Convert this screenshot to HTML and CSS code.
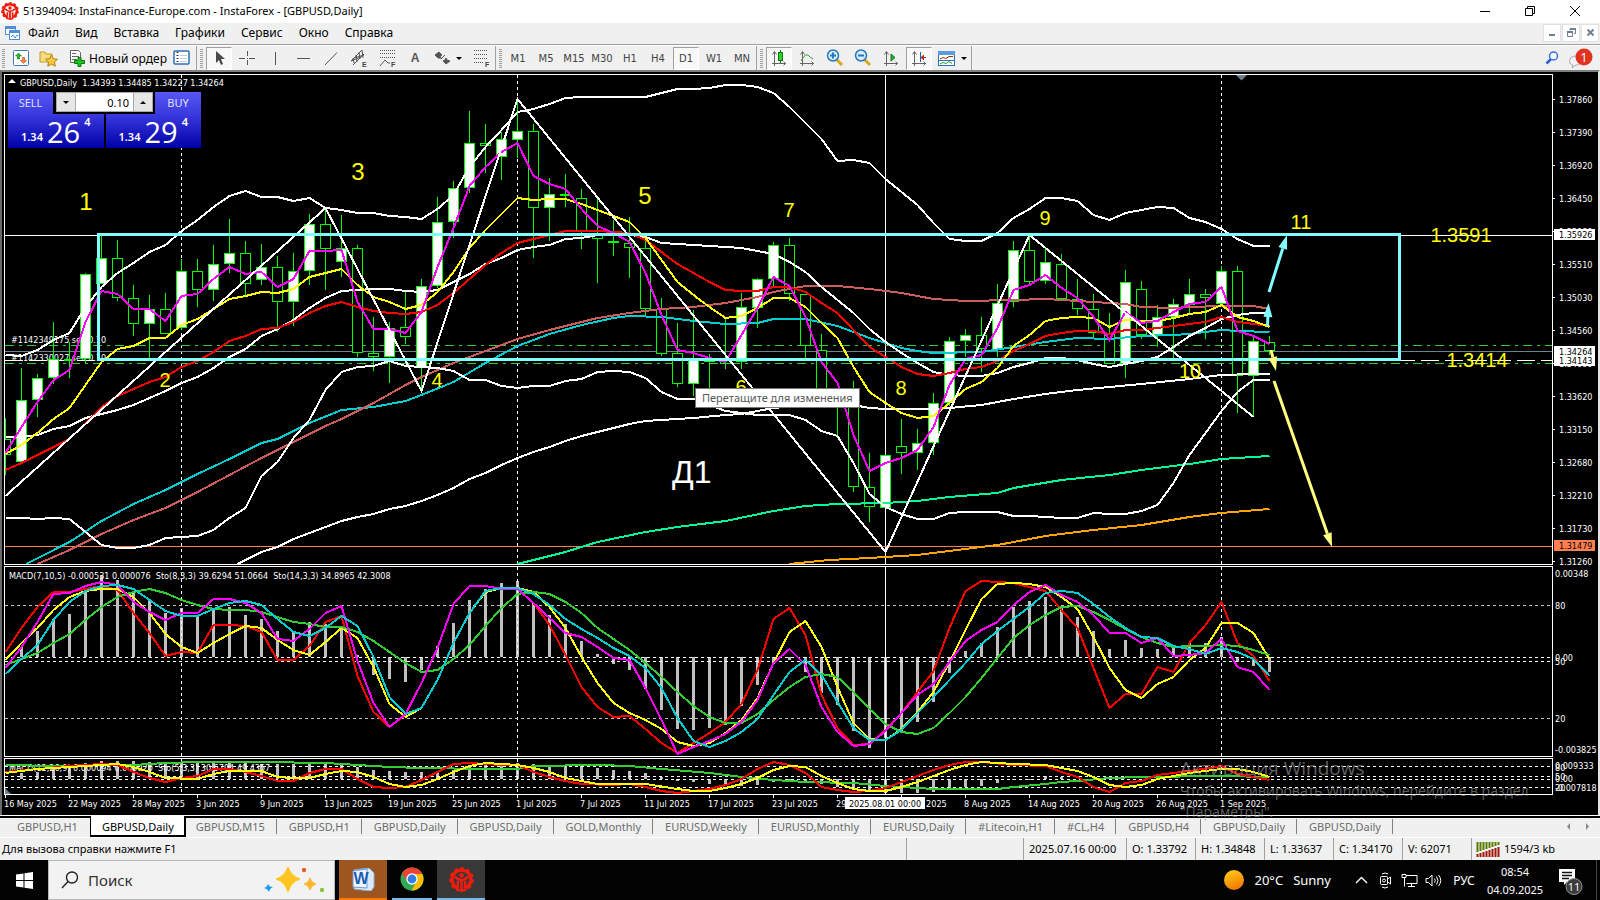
FILE: index.html
```html
<!DOCTYPE html>
<html lang="ru">
<head>
<meta charset="utf-8">
<title>51394094: InstaFinance-Europe.com - InstaForex - [GBPUSD,Daily]</title>
<link rel="stylesheet" href="styles.css">
</head>
<body>
<header class="titlebar">
  <svg class="app-logo" width="18" height="18" viewBox="0 0 24 24"><use href="#insta"/></svg>
  <span class="title">51394094: InstaFinance-Europe.com - InstaForex - [GBPUSD,Daily]</span>
  <button class="win" aria-label="Свернуть"><svg width="12" height="12"><path d="M1 6.500h10" stroke="#000"/></svg></button>
  <button class="win" aria-label="Восстановить"><svg width="12" height="12" fill="none" stroke="#000"><path d="M1.500 3.500h7v7h-7zM3.500 3.500v-2h7v7h-2"/></svg></button>
  <button class="win" aria-label="Закрыть"><svg width="12" height="12"><path d="M1 1l10 10M11 1L1 11" stroke="#000"/></svg></button>
</header>

<nav class="menubar">
  <svg width="15" height="15" fill="#fff" stroke="#4f8fd8"><rect x=".5" y="1.500" width="10" height="8"/><path d="M.5 3h10" stroke-width="2"/><rect x="4.500" y="5.500" width="10" height="9"/><path d="M4.500 7h10" stroke-width="2"/><path d="M6 12l2-2 2 3 2-3 1 1" fill="none"/></svg>
  <button>Файл</button><button>Вид</button><button>Вставка</button><button>Графики</button><button>Сервис</button><button>Окно</button><button>Справка</button>
  <span class="grow"></span>
  <button class="mdi" aria-label="Свернуть окно"><svg width="9" height="9"><path d="M1 7h6" stroke="#708090" stroke-width="2"/></svg></button>
  <button class="mdi" aria-label="Восстановить окно"><svg width="9" height="9" fill="none" stroke="#708090"><path d="M.5 4v4.500h5V4M3 2.500V.5h5.500v5H7"/><path d="M0 4h6M3 1h6" stroke-width="2"/></svg></button>
  <button class="mdi" aria-label="Закрыть окно"><svg width="9" height="9"><path d="M1.500 1.500l6 6M7.500 1.500l-6 6" stroke="#708090" stroke-width="2"/></svg></button>
</nav>

<div class="toolbar">
  <span class="grip"></span>
  <button class="tool" aria-label="Новый график"><svg width="16" height="16"><rect x=".5" y=".5" width="15" height="15" rx="1" fill="#fff" stroke="#3d7ab8"/><path d="M5.500 3l3 3h-2v3h-2V6h-2z" fill="#2fb62f" stroke="#0c7a0c" stroke-width=".6"/><path d="M10.500 13.500l-3-3h2v-3h2v3h2z" fill="#ff8a4a" stroke="#c43c08" stroke-width=".6"/></svg></button>
  <button class="tool" aria-label="Профили"><svg width="20" height="17"><path d="M1 2h5l1 2h6v8H1z" fill="#f6dc7e" stroke="#c09a28"/><path d="M12.500 5l1.800 3.700 4.200.5-3 2.900.8 4.100-3.800-2-3.700 2 .7-4.100-3-2.900 4.200-.5z" fill="#f6c840" stroke="#b08010"/></svg></button>
  <button class="tool order"><svg width="16" height="18"><path d="M1.500 1.500h8l2 2v10h-10z" fill="#fff" stroke="#666"/><path d="M3 4.500h4M3 7.500h7M3 10.500h5" stroke="#666"/><path d="M9 8.500h3v3h3.500v3H12v3H9v-3H5.500v-3H9z" fill="#1fc41f" stroke="#067806"/></svg><span>Новый ордер</span></button>
  <button class="tool market" aria-label="Обзор рынка"><svg width="17" height="16"><rect x="1" y="1" width="15" height="13" rx="1" fill="#fff" stroke="#2d6fb5" stroke-width="1.500"/><path d="M4.500 2v12" stroke="#333" stroke-width="2" stroke-dasharray="1 2"/><path d="M7 5.500h7M7 8.500h7M7 11.500h7" stroke="#bcd0ec"/></svg></button>
  <span class="sep first"></span><span class="grip"></span>
  <button class="tool on" aria-label="Курсор"><svg width="16" height="16"><path d="M5 1v12l3-3 2 5 2-1-2-5h4z" fill="#4a4a4a"/></svg></button>
  <button class="tool" aria-label="Перекрестие"><svg width="16" height="16"><path d="M0 8.500h6M10 8.500h6M8.500 1v5M8.500 10v5M8 8.500h1" stroke="#555"/></svg></button>
  <button class="tool" aria-label="Вертикальная линия"><svg width="16" height="16"><path d="M8.500 2v13" stroke="#555"/></svg></button>
  <button class="tool" aria-label="Горизонтальная линия"><svg width="16" height="16"><path d="M2 8.500h13" stroke="#555"/></svg></button>
  <button class="tool" aria-label="Трендовая линия"><svg width="16" height="16"><path d="M2 15L14 2.500" stroke="#555"/></svg></button>
  <button class="tool" aria-label="Канал"><svg width="18" height="18"><path d="M1 12L12 1M3 16L14 5M3 9l1 5M6 6l1 7M9 3l1 7M12 1l1 8M1 12l10-4M4 9l10-3" stroke="#555" fill="none"/><text x="12" y="18" class="ico-t">E</text></svg></button>
  <button class="tool" aria-label="Фибоначчи"><svg width="17" height="18"><path d="M1 1.500h15M1 4.500h15M1 8.500h15" stroke="#555" stroke-dasharray="1 1"/><path d="M1 17l5-6 3 3h2" stroke="#555" fill="none"/><text x="12" y="18" class="ico-t">F</text></svg></button>
  <button class="tool letter" aria-label="Текст">A</button>
  <button class="tool wide" aria-label="Стрелки"><svg width="15" height="14"><path d="M4 1l3 3-2 1 1 2H3L0 4zM6 8l4-4M11 7l1 2 3 1-4 3-3-3 2-1z" fill="#555" stroke="#555"/></svg><i class="caret"></i></button>
  <button class="tool" aria-label="Уровни"><svg width="17" height="18"><path d="M1 1.500h14M1 5.500h14M1 9.500h14M1 13.500h9" stroke="#555" stroke-dasharray="1 1"/><text x="12" y="18" class="ico-t">F</text></svg></button>
  <span class="sep"></span><span class="grip"></span>
  <button class="tool tf">M1</button><button class="tool tf">M5</button><button class="tool tf">M15</button><button class="tool tf">M30</button><button class="tool tf">H1</button><button class="tool tf">H4</button><button class="tool tf on">D1</button><button class="tool tf">W1</button><button class="tool tf">MN</button>
  <span class="sep"></span><span class="grip"></span>
  <button class="tool on" aria-label="Свечи"><svg width="16" height="17"><path d="M3.500 2v14M1 13.500h14M1.500 4.500l2-3 2 3M12.500 11.500l2 2-2 2" stroke="#666" fill="none"/><path d="M9.500 0v13" stroke="#0a7a0a"/><rect x="7.500" y="2.500" width="4" height="8" fill="#30d030" stroke="#0a7a0a"/></svg></button>
  <button class="tool" aria-label="Линия"><svg width="16" height="17"><path d="M3.500 2v14M1 13.500h14M1.500 4.500l2-3 2 3M12.500 11.500l2 2-2 2" stroke="#666" fill="none"/><path d="M2 11q5-10 9-4l3 2" stroke="#3a9a3a" fill="none"/></svg></button>
  <button class="tool" aria-label="Приблизить"><svg width="18" height="18"><path d="M10 10l6 6" stroke="#d8a820" stroke-width="3"/><circle cx="7" cy="6.500" r="5.500" fill="#d4ecfb" stroke="#2a78b8" stroke-width="1.500"/><path d="M4 6.500h6M7 3.500v6" stroke="#2a78b8" stroke-width="2"/></svg></button>
  <button class="tool" aria-label="Отдалить"><svg width="18" height="18"><path d="M10 10l6 6" stroke="#d8a820" stroke-width="3"/><circle cx="7" cy="6.500" r="5.500" fill="#d4ecfb" stroke="#2a78b8" stroke-width="1.500"/><path d="M4 6.500h6" stroke="#2a78b8" stroke-width="2"/></svg></button>
  <button class="tool" aria-label="Автопрокрутка"><svg width="16" height="17"><path d="M3.500 2v14M1 13.500h14M1.500 4.500l2-3 2 3M12.500 11.500l2 2-2 2" stroke="#666" fill="none"/><path d="M8 4l4 3.500L8 11z" fill="#20b040" stroke="#0a7a0a"/></svg></button>
  <button class="tool on" aria-label="Сдвиг графика"><svg width="16" height="17"><path d="M3.500 2v14M1 13.500h14M1.500 4.500l2-3 2 3M12.500 11.500l2 2-2 2" stroke="#666" fill="none"/><path d="M9.500 2v10" stroke="#1c62a8"/><path d="M15 7.500h-4M13 5l-3 2.500L13 10" fill="#b03010" stroke="#b03010"/></svg></button>
  <button class="tool wide" aria-label="Шаблоны"><svg width="17" height="15"><rect x=".5" y=".5" width="16" height="14" fill="#fff" stroke="#2d6fb5"/><path d="M0 2h17" stroke="#5a9ce0" stroke-width="4"/><path d="M2 8l3-1.500 3 1 3-2 4 0" stroke="#a03010" fill="none"/><path d="M1 9.500h15" stroke="#2d6fb5"/><path d="M2 13l3-1.500 3 1 3-2 3 2" stroke="#2a9a2a" fill="none"/></svg><i class="caret"></i></button>
  <span class="sep"></span>
  <span class="grow"></span>
  <button class="tool" aria-label="Поиск"><svg width="14" height="14"><path d="M1.500 12.500L6 8" stroke="#2a5fd0" stroke-width="2.500"/><circle cx="8.500" cy="5" r="4" fill="#f4f8ff" stroke="#3a70d8" stroke-width="1.500"/></svg></button>
  <button class="tool chat" aria-label="Сообщения"><svg width="26" height="21"><path d="M8 8c-8 0-8 9-3 9l-1 3 4-3c7 0 8-9 0-9z" fill="#f2f2f6" stroke="#a8a8b0"/><circle cx="16" cy="9" r="8.500" fill="#e03420"/><text x="16" y="14" text-anchor="middle" class="badge-t">1</text></svg></button>
</div>

<main class="workspace">
  <div class="chart">
    <div class="pane"><svg id="main"></svg>
      <div class="trade">
        <button class="side">SELL</button>
        <div class="spin"><button aria-label="Меньше"><i class="caret"></i></button><input aria-label="Объём" value="0.10"><button aria-label="Больше"><i class="caret up"></i></button></div>
        <button class="side">BUY</button>
        <div class="quotes"><button class="quote">1.34<b>26</b><sup>4</sup></button><button class="quote">1.34<b>29</b><sup>4</sup></button></div>
      </div>
      <div class="tip">Перетащите для изменения</div>
    </div>
    <svg class="scale" id="main-scale"></svg>
    <div class="pane"><svg id="osc"></svg></div>
    <svg class="scale" id="osc-scale"></svg>
    <div class="pane"><svg id="osc2"></svg></div>
    <svg class="scale" id="osc2-scale"></svg>
    <svg class="dates" id="dates"></svg>
  </div>
  <div class="activate"><strong>Активация Windows</strong><span>Чтобы активировать Windows, перейдите в раздел</span><span>"Параметры".</span></div>
</main>

<nav class="tabs">
  <button>GBPUSD,H1</button><button class="active">GBPUSD,Daily</button><button>GBPUSD,M15</button><button>GBPUSD,H1</button><button>GBPUSD,Daily</button><button>GBPUSD,Daily</button><button>GOLD,Monthly</button><button>EURUSD,Weekly</button><button>EURUSD,Monthly</button><button>EURUSD,Daily</button><button>#Litecoin,H1</button><button>#CL,H4</button><button>GBPUSD,H4</button><button>GBPUSD,Daily</button><button>GBPUSD,Daily</button>
  <span class="grow"></span>
  <svg width="24" height="9" fill="#888"><path d="M4 1v7L1 4.500zM20 1v7l3-3.500z"/></svg>
</nav>

<footer class="status">
  <span class="help">Для вызова справки нажмите F1</span><span class="blank"></span><span class="when">2025.07.16 00:00</span><span>O: 1.33792</span><span>H: 1.34848</span><span>L: 1.33637</span><span>C: 1.34170</span><span>V: 62071</span>
  <span class="net"><svg width="24" height="15"><path d="M1.500 0v10M4.500 0v9M7.500 0v8M10.500 0v7M13.500 0v6M16.500 0v5M19.500 0v4M22.500 0v3" stroke="#5c7a00" stroke-width="2"/><path d="M1.500 12v3M4.500 11v4M7.500 10v5M10.500 9v6M13.500 8v7M16.500 7v8M19.500 6v9M22.500 5v10" stroke="#a01808" stroke-width="2"/></svg>1594/3 kb</span>
</footer>

<div class="taskbar">
  <button class="start" aria-label="Пуск"><svg width="17" height="17" fill="#fff"><path d="M0 2.500l7.500-1V8H0zM8.500 1.300L17 0v8H8.500zM0 9h7.500v6.500L0 14.500zM8.500 9H17v8l-8.500-1.300z"/></svg></button>
  <label class="search">
    <svg width="18" height="18" fill="none" stroke="#222" stroke-width="1.400"><circle cx="11" cy="6.500" r="5.500"/><path d="M7 10.500L1 17"/></svg>
    <input aria-label="Поиск" placeholder="Поиск">
    <svg width="62" height="26"><path d="M24 1q2.500 8.500 11 11-8.500 2.500-11 12-2.500-9.500-11-12 8.500-2.500 11-11z" fill="#fcc521" stroke="#fcc521" stroke-width="2" stroke-linejoin="round"/><path d="M46 11q1 5 6 6-5 1-6 6-1-5-6-6 5-1 6-6z" fill="#fbb52a" stroke="#fbb52a"/><path d="M4 17q1 3 5 3-3 1-4 5-1-3-5-4 3-1 4-4z" fill="#1d9bf0"/><circle cx="40" cy="3" r="2.200" fill="#f25c22"/><circle cx="58" cy="23" r="2.200" fill="#8bc53f"/></svg>
  </label>
  <button class="task word" aria-label="Word"><svg width="23" height="23"><path d="M2 2L17 0l5 5v14l-3 4-17-2z" fill="#dce9fa" stroke="#8cb0e0"/><path d="M1 3l14-2v19L1 19z" fill="#eef5ff" stroke="#6f9ad8"/><text x="9" y="16" text-anchor="middle" class="w-t">W</text></svg></button>
  <button class="task chrome" aria-label="Chrome"><svg width="24" height="24"><circle cx="12" cy="12" r="11.500" fill="#34a853"/><path d="M2 6.200A11.500 11.500 0 0 1 22.300 7H12L7.500 14.500z" fill="#ea4335"/><path d="M22.400 7A11.500 11.500 0 0 1 11.500 23.500L16.500 14.500 15 7z" fill="#fbbc04"/><circle cx="12" cy="12" r="5.700" fill="#fff"/><circle cx="12" cy="12" r="4.400" fill="#2f7de9"/></svg></button>
  <button class="task insta" aria-label="InstaForex"><svg width="25" height="25" viewBox="0 0 24 24"><use href="#insta"/></svg></button>
  <span class="grow"></span>
  <button class="weather"><i class="sun"></i><span>20°C</span><span>Sunny</span></button>
  <button class="tray" aria-label="Скрытые значки"><svg width="13" height="8" fill="none" stroke="#fff" stroke-width="1.400"><path d="M1 7l5.500-5.500L12 7"/></svg></button>
  <button class="tray" aria-label="Камера"><svg width="13" height="17" fill="none" stroke="#fff"><path d="M3 2q3-2 6 0M3 15q3 2 6 0"/><rect x="1.500" y="4.500" width="7" height="8" rx="1"/><circle cx="5" cy="8.500" r="1.500"/><path d="M8.500 7l3-2v7l-3-2"/></svg></button>
  <button class="tray" aria-label="Сеть"><svg width="17" height="15" fill="none" stroke="#fff"><path d="M5 2.500h11v8H5.500M10.500 10.500v3M7 13.500h7M3.500 5v8.500M1 1.500h4v3H1z"/></svg></button>
  <button class="tray" aria-label="Громкость"><svg width="17" height="15" fill="none" stroke="#fff"><path d="M1 5.500h2.500L7 2v11L3.500 9.500H1zM9.500 5.500q1.500 2 0 4M11.500 3.500q3 4 0 8M13.500 2q4.500 5.500 0 11"/></svg></button>
  <button class="lang">РУС</button>
  <button class="clock"><span>08:54</span><span>04.09.2025</span></button>
  <button class="notes" aria-label="Уведомления"><svg width="27" height="28"><path d="M1 1h16v13H9l-3 3v-3H1z" fill="#fff"/><path d="M4 4.500h10M4 7.500h10M4 10.500h7" stroke="#111" stroke-width="1.400"/><circle cx="16" cy="18.500" r="8" fill="#3c3c3c" stroke="#999"/><text x="16" y="23" text-anchor="middle" class="note-t">11</text></svg></button>
</div>

<svg class="defs" aria-hidden="true"><symbol id="insta" viewBox="0 0 24 24"><g fill="none" stroke="#ee1c0e"><path d="M8.500 20.500A9.500 9.500 0 0 1 5.500 5.500M15.500 20.500A9.500 9.500 0 0 0 18.500 5.500M5.500 5.500Q12 .5 18.500 5.500" stroke-width="3.200"/><circle cx="12" cy="12" r="10.500" stroke-width="2.600" stroke-dasharray="3.400 2.600"/><path d="M12 12v12M8.500 13.500v7M15.500 13.500v7" stroke-width="2.400"/><path d="M5.500 9q3 3.500 6.500 3.500T18.500 9" stroke-width="2.400"/></g><circle cx="12" cy="8" r="2.300" fill="#ee1c0e"/></symbol></svg>
<script src="chart.js"></script>
</body>
</html>
```
FILE: styles.css
```css
* { box-sizing: border-box; }
html, body { height: 100%; }
body { margin: 0; display: flex; flex-direction: column; overflow: hidden; background: #f0f0f0; color: #000; font: 12px "Noto Sans", "Open Sans", sans-serif; }
button { margin: 0; padding: 0; border: 0; background: none; font: inherit; color: inherit; }
input { margin: 0; padding: 0; border: 0; min-width: 0; font: inherit; }
svg { display: block; flex: none; }
.grow { flex: 1; }
.defs { position: absolute; width: 0; height: 0; }

.titlebar { flex: none; height: 23px; display: flex; align-items: center; background: #fff; padding: 0 3px 2px 1px; }
.title { flex: 1; padding-left: 4px; font-size: 11px; line-height: 23px; }
.win { width: 45px; height: 23px; display: grid; place-items: center; }

.menubar { flex: none; height: 22px; display: flex; align-items: center; gap: 16px; padding: 0 0 2px 5px; border-bottom: 1px solid #a0a0a0; }
.menubar button:first-of-type { margin-left: -8px; }
.menubar .mdi { width: 18px; height: 18px; display: grid; place-items: center; background: #fff; border: 1px solid #e0e0e0; margin: 0 1px 0 -16px; }

.toolbar { flex: none; height: 25px; display: flex; align-items: center; border-top: 1px solid #fff; padding-left: 2px; }
.tool { flex: none; width: 28px; height: 23px; display: flex; align-items: center; justify-content: center; color: #444; }
.tool.on { background: #f8f8f8; border: 1px solid #a0a0a0; border-right-color: #fff; border-bottom-color: #fff; width: 26px; margin: 0 1px; }
.tool.order { width: 104px; padding-left: 6px; gap: 4px; color: #000; justify-content: flex-start; }
.tool.market { width: 28px; }
.tool.wide { width: 38px; gap: 6px; }
.tool.letter { font: bold 12px "Liberation Sans", sans-serif; color: #555; }
.tool.tf { font: 10px "DejaVu Sans", sans-serif; }
.tool.chat { width: 34px; padding-right: 4px; }
.grip { width: 3px; height: 19px; margin-right: 2px; background: repeating-linear-gradient(#a0a0a0 0 1px, #f0f0f0 1px 2px); }
.sep { width: 1px; height: 24px; background: #a0a0a0; margin: 0 3px 0 0; }
.sep.first { margin-left: 1px; }
.caret { width: 0; height: 0; border: 3px solid transparent; border-top-color: #000; border-bottom: 0; }
.caret.up { border: 3px solid transparent; border-bottom-color: #000; border-top: 0; }
.ico-t { font: bold 7px "Liberation Sans", sans-serif; fill: #444; }
.badge-t { font: 13px "Open Sans", sans-serif; fill: #fff; }

.workspace { position: relative; flex: 1; min-height: 0; display: flex; background: #000; border: solid #696969; border-width: 2px 2px 0; border-top-color: #808080; border-right-color: #e3e3e3; padding: 2px 0 0 2px; }
.chart { flex: 1; min-width: 0; display: grid; grid-template-columns: minmax(0, 1fr) 45px; grid-template-rows: minmax(0, 491fr) minmax(0, 191fr) minmax(0, 37fr) 19px; row-gap: 1px; }
.pane { position: relative; border: 1px solid #fff; overflow: hidden; }
.pane > svg { width: 100%; height: 100%; }
.scale { width: 45px; height: 100%; overflow: visible; }
.dates { grid-column: 1 / -1; width: 100%; height: 20px; margin-top: -1px; overflow: visible; }
.chart text { font: 9px "DejaVu Sans Condensed", "Open Sans", sans-serif; fill: #fff; }
.chart .mark { font: 20px "Liberation Sans", sans-serif; fill: #ff0; }
.chart .mark.big { font-size: 24px; }
.chart .name { font: 32px "Liberation Sans", sans-serif; fill: #fff; }
.chart .on-white { fill: #000; }

.trade { position: absolute; left: 3px; top: 17px; width: 193px; display: grid; grid-template-columns: 45px minmax(0, 1fr) 46px; }
.trade button { color: #dfe0ff; font-size: 11px; }
.side { height: 22px; padding-bottom: 2px; background: linear-gradient(#5757f5, #3a3ade); }
.trade .side { padding-bottom: 2px; }
.spin { display: flex; height: 20px; margin: 0 2px 0 3px; border: 1px solid #a8a8a8; background: #fff; }
.trade .spin button { flex: none; width: 18px; background: #e6e6e6; display: grid; place-items: center; }
.spin input { flex: 1; width: 0; text-align: right; padding-right: 4px; border: solid #a8a8a8; border-width: 0 1px; background: #fff; font-size: 11px; }
.quotes { grid-column: 1 / -1; display: grid; grid-template-columns: 1fr 1fr; column-gap: 2px; }
.trade .quote { height: 34px; display: flex; align-items: flex-end; justify-content: center; padding-bottom: 5px; background: linear-gradient(#3a3ade, #0000a8); color: #fff; font-weight: 600; line-height: 12px; }
.quote b { font: 29px "Open Sans", sans-serif; line-height: 22px; padding: 0 4px; }
.quote sup { align-self: flex-start; padding-top: 2px; font-size: 11px; line-height: 12px; }
.tip { position: absolute; left: 690px; top: 313px; padding: 0 6px; background: #fff; border: 1px solid #767676; color: #575757; font-size: 11px; line-height: 18px; white-space: nowrap; }

.activate { position: absolute; left: 1178px; top: 684px; display: flex; flex-direction: column; color: rgba(165, 165, 165, .6); font: 14px "Open Sans", sans-serif; line-height: 21px; white-space: nowrap; z-index: 2; }
.activate strong { font-size: 19px; font-weight: 400; line-height: 24px; }

.tabs { flex: none; height: 23px; display: flex; align-items: center; border-top: 1px solid #fff; border-bottom: 1px solid #fff; padding: 0 10px 0 2px; color: #6d6d6d; font-size: 11px; box-shadow: inset 0 2px #000; }
.tabs button { padding: 0 11px 0 12px; height: 15px; line-height: 14px; border-right: 1px solid #808080; }
.tabs button:first-child { padding: 0 12px 0 15px; border: 0; }
.tabs .active { align-self: stretch; height: auto; background: #fff; color: #000; border: solid #000; border-width: 0 2px 2px 1px; padding: 2px 10px 0 11px; }
.tabs .active + button { padding-left: 10px; }
.status { flex: none; height: 22px; display: flex; align-items: stretch; font-size: 11px; line-height: 22px; }
.status span { padding: 0 5px; width: 69px; border-left: 1px solid #a0a0a0; white-space: nowrap; }
.status .help { flex: 1; border: 0; padding-left: 2px; }
.status .blank { width: 117px; }
.status .when { width: 103px; }
.status .net { width: 129px; display: flex; align-items: center; gap: 4px; padding-left: 4px; }

.taskbar { flex: none; height: 40px; display: flex; align-items: stretch; background: #030303; color: #fff; font-size: 13px; }
.start { width: 48px; display: grid; place-items: center; }
.search { width: 287px; display: flex; align-items: center; gap: 9px; padding: 0 8px 0 12px; background: #f2f2f2; border: 1px solid #b8b8b8; }
.search input { flex: 1; background: none; font-size: 15px; }
.search input::placeholder { color: #333; opacity: 1; }
.task { width: 48px; display: grid; place-items: center; border-bottom: 2px solid #76b9ed; }
.task.word { margin-left: 4px; background: #9d5620; border-color: #ff7b00; }
.task.chrome { width: 40px; margin: 0 5px; }
.task.insta { background: #383838; }
.w-t { font: bold 16px "Liberation Sans", sans-serif; fill: #1c5cb0; }
.weather { display: flex; align-items: center; gap: 10px; margin-right: 18px; }
.sun { width: 20px; height: 20px; border-radius: 50%; background: linear-gradient(160deg, #ffd21a, #f06a00); }
.tray { width: 24px; display: grid; place-items: center; }
.lang { width: 38px; font-size: 12px; }
.clock { width: 80px; display: flex; flex-direction: column; align-items: center; justify-content: center; gap: 1px; font-size: 11px; line-height: 17px; margin-left: -8px; }
.clock span { white-space: nowrap; }
.notes { width: 42px; margin-right: 3px; border-right: 1px solid #444; display: grid; place-items: center; }
.taskbar .notes { padding: 4px 8px 0 0; }
.note-t { font: 11px "Open Sans", sans-serif; fill: #fff; }
```
FILE: chart.js
```js
// Bars are 16px apart; vertical values are screen rows, shifted by each pane's top.
const STEP = 16;
const bx = i => i * STEP + 0.5;

// "355 356 8:263" -> consecutive bars, with "i:y" jumping to bar i
function parse(text) {
  let i = -1;
  return text.trim().split(/\s+/).map(t => {
    const p = t.split(':');
    i = p.length > 1 ? +p[0] : i + 1;
    return [i, +p[p.length - 1]];
  });
}
const line = (top, color, text, w = 2) =>
  `<polyline points="${parse(text).map(([i, y]) => bx(i) + ',' + (y - top)).join(' ')}" fill="none" stroke="${color}" stroke-width="${w}" shape-rendering="crispEdges"/>`;
const hline = (y, color, dash = '', x1 = 0, x2 = '100%') =>
  `<line x1="${x1}" x2="${x2}" y1="${y + .5}" y2="${y + .5}" stroke="${color}" stroke-dasharray="${dash}" shape-rendering="crispEdges"/>`;
const vline = (i, dash = '') =>
  `<line x1="${bx(i)}" x2="${bx(i)}" y1="0" y2="100%" stroke="#fff" stroke-dasharray="${dash}" shape-rendering="crispEdges"/>`;
const text = (x, y, s, cls = '', anchor = 'start') =>
  `<text x="${x}" y="${y}" class="${cls}" text-anchor="${anchor}">${s}</text>`;
const verticals = () => [11, 32, 76].map(i => vline(i, '3 3')).join('') + vline(55);
const draw = (id, html) => { document.getElementById(id).innerHTML = html; };

// high, body top, body bottom, low, rising (1) or falling (0)
const candles = [
[418,439,455,475,0],[368,400,462,462,1],[374,378,400,417,1],[322,359,378,384,1],[342,359,360,378,0],[273,274,359,363,1],[235,258,284,284,1],[240,258,298,301,0],
[285,298,324,336,0],[295,309,324,359,1],[293,309,334,334,0],[259,271,328,330,1],[259,271,290,307,0],[245,264,290,301,1],[219,253,264,273,1],[241,253,284,296,0],
[244,267,280,285,1],[256,267,302,332,0],[253,271,302,326,1],[214,224,271,285,1],[210,224,249,290,0],[215,248,262,277,1],[245,248,353,357,0],[317,353,357,371,0],
[322,328,357,383,1],[292,327,337,344,0],[279,286,368,390,1],[197,222,286,288,1],[181,188,222,238,1],[111,143,188,193,1],[124,143,146,173,0],[132,139,157,180,1],
[100,131,140,158,1],[124,131,208,258,0],[178,194,208,241,1],[174,194,195,207,0],[189,198,231,249,0],[199,234,239,283,0],[220,241,243,256,0],[217,243,248,278,0],
[237,248,309,315,0],[298,309,354,356,0],[323,353,384,387,0],[310,360,384,396,1],[354,360,362,390,0],[319,360,364,369,0],[293,307,362,369,1],[278,279,308,328,1],
[242,245,279,287,1],[238,245,294,301,0],[294,294,346,358,0],[334,350,395,400,0],[388,395,405,436,0],[381,395,487,492,0],[453,487,507,522,0],[455,455,508,508,1],
[419,446,453,474,0],[429,443,453,470,1],[393,403,443,455,1],[337,341,403,406,1],[329,335,341,357,1],[317,335,349,372,0],[284,303,350,357,1],[241,250,302,307,1],
[237,250,282,285,0],[249,262,281,284,1],[254,264,299,299,0],[279,299,309,315,0],[294,309,333,338,0],[313,333,364,364,0],[270,282,364,378,1],[281,289,335,339,0],
[305,317,335,347,1],[299,304,317,358,1],[279,294,305,313,1],[289,294,298,339,0],[266,271,304,306,1],[266,271,376,413,0],[335,341,376,417,1],[336,342,351,355,0]];

function candle([hi, a, b, lo, up], i) {
  const x = bx(i), t = 75;
  return `<path d="M${x} ${hi - t}V${a - t}M${x} ${b - t}V${lo - t}" stroke="#0f0"/>` +
    `<rect x="${x - 5}" y="${a - t + .5}" width="10" height="${Math.max(b - a - 1, 1)}" fill="${up ? '#fff' : '#000'}" stroke="#0f0"/>`;
}
function arrow(x1, y1, x2, y2, color) {
  const a = Math.atan2(y2 - y1, x2 - x1), L = 14, hx = x2 - L * Math.cos(a), hy = y2 - L * Math.sin(a);
  const nx = -Math.sin(a) * 4.5, ny = Math.cos(a) * 4.5;
  return `<path d="M${x1} ${y1}L${hx} ${hy}" stroke="${color}" stroke-width="3"/><path d="M${x2} ${y2}L${hx + nx} ${hy + ny}L${hx - nx} ${hy - ny}z" fill="${color}"/>`;
}

const T = 75;
draw('main',
  verticals() +
  hline(235 - T, '#fff') + hline(345 - T, '#32cd32', '9 5 3 5') + hline(363 - T, '#32cd32', '9 5 3 5') +
  hline(351 - T, '#708090') + hline(360 - T, '#fff', '18 6') + hline(546 - T, '#ff7f50') +
  text(6, 343 - T, '#1142349175 sell 0.10') + text(6, 361 - T, '#1142330027 sell 0.10') +
  `<g shape-rendering="crispEdges">${candles.map(candle).join('')}</g>` +
  line(T, '#00ced1', '1.300:564 4:542 6:521 8:504 10:490 12:474 14:459 16:443 17:439 19:423 21:410 23:407 25:401 26:395 28:382 30:363 32:346 34:334 36:325 38:318 39:316 41:317 43:321 45:324 47:323 48:319 50:319 52:326 54:338 56:348 57:351 58:353 61:352 63:347 65:342 67:338 69:339 71:336 73:335 74:334 76:330 77:331 79:332') +
  line(T, '#cd5c5c', '2:564 4:550 6:534 8:520 10:508 12:492 14:475 16:458 18:442 20:426 21:419 23:403 25:385 26:377 28:363 30:351 32:339 34:330 36:322 37:318 39:313 41:309 43:307 45:303 47:297 48:292 50:286 52:286 54:289 56:293 58:299 60:301 63:300 65:299 67:301 70:304 71:307 73:308 74:307 76:306 78:306 79:309') +
  line(T, '#00fa9a', '32:564 35:552 37:542 40:532 42:527 45:521 48:511 50:506 52:504 55:503 57:501 59:497 62:493 63:488 66:480 69:475 71:470 74:464 76:459 79:456') +
  line(T, '#ffa500', '49:564 51.500:560 54:558 57:555 59:551 62:545 65:536 68:530 71:525 74:517 76:513 79:509') +
  line(T, '#fff', '355 356 350 340 333 307 287 273 263 252 245 231 220 207 196 191 197 197 201 198 208 210 213 213 216 217 219 209 195 167 147 130 112 109 104 98 97 97 97 97 97 93 89 89 88 85 85 87 93 107 123 139 161 160 163 179 192 205 223 239 241 241 233 218 209 198 198 201 215 220 213 210 207 208 218 222 229 239 246 246') +
  line(T, '#fff', '437 437 435 429 426 418 414 410 405 398 391 383 377 368 357 349 336 329 320 308 298 291 290 289 289 291 292 290 282 274 264 258 250 247 245 239 238 235 234 235 237 243 244 245 246 247 248 251 254 262 272 287 300 313 329 342 353 363 372 375 376 376 373 367 363 358 358 360 364 367 364 361 357 347 336 328 319 315 313 313') +
  line(T, '#fff', '518 518 519 518 519 532 545 548 548 545 538 537 536 530 518 508 476 462 438 420 390 372 367 366 361 366 367 368 371 380 380 386 388 386 386 381 379 372 371 372 378 392 399 399 405 411 413 415 415 415 420 431 436 463 494 507 514 519 519 513 512 512 512 516 516 517 518 518 513 514 514 511 505 483 455 433 411 392 380 380') +
  line(T, '#fff', '14.500:564 15:560 552 547 539 533 527 521 517 514 509 506 501 495 488 479 473 465 458 452 447 441 436 432 428 424 421 420 43:418 45:415 414 411 408 50:405 53:405 408 409 58:409 408 61:405 63:399 65:394 67:390 69:387 71:384 74:379 76:375 78:374 79:374') +
  line(T, '#f00', '470 463 455 447 439 423 407 396 389 382 377 367 361 352 341 336 329 328 322 313 306 302 307 311 313 314 312 305 293 279 265 253 243 239 235 231 231 231 232 233 240 252 264 273 282 290 291 291 287 287 292 303 313 330 347 357 367 374 376 373 369 367 361 351 344 336 333 331 331 334 330 330 328 326 324 322 317 322 324 326') +
  line(T, '#ff0', '454 445 433 419 408 385 362 349 346 338 338 325 319 309 299 296 292 293 289 277 273 269 285 297 302 309 305 292 272 248 230 214 198 200 199 199 204 210 216 222 238 260 282 295 307 318 316 308 298 298 307 323 338 367 392 403 413 418 416 403 389 382 368 346 335 321 318 317 318 327 320 321 321 318 314 312 305 317 321 327') +
  line(T, '#f0f', '453 427 402 380 370 322 291 294 309 309 321 296 294 279 267 274 272 287 279 251 251 250 302 329 329 333 312 267 228 186 167 152 143 176 184 189 209 226 233 242 273 315 350 353 358 362 335 308 277 286 317 362 383 435 471 463 458 450 427 385 359 355 328 290 285 275 288 298 317 340 312 323 321 312 304 302 287 331 336 344') +
  line(T, '#fff', '0:496 20:208 26:391 32:99 55:552 64:235 78:417') +
  `<rect x="93.500" y="${234.5 - T}" width="1301" height="125" fill="none" stroke="#7fffff" stroke-width="3"/>` +
  arrow(1264, 217, 1282, 160, '#7fffff') + arrow(1262.5, 251, 1263.5, 228, '#7fffff') +
  arrow(1266, 275, 1271, 296, '#ffff80') + arrow(1269, 306, 1327, 472, '#ffff80') +
  `<path d="M1231 0h11l-5.500 5.500z" fill="#708090"/>` +
  [[81,135,1,' big'],[353,105,3,' big'],[640,129,5,' big'],[160,312,2],[432,312,4],[784,142,7],[736,319,6],[896,320,8],[1040,150,9],[1185,303,10],[1296,154,11],[1456,167,'1.3591'],[1472,292,'1.3414']]
    .map(([x, y, s, c = '']) => text(x, y, s, 'mark' + c, 'middle')).join('') +
  text(667, 408, 'Д1', 'name') +
  `<path d="M3 8h8l-4-4z" fill="#fff"/>` + text(15, 11, 'GBPUSD,Daily&#160; 1.34393 1.34485 1.34227 1.34264'));

const tag = (y, s, bg) => `<rect x="1" y="${y - 5}" width="41" height="11" fill="${bg}"/>` + text(6, y + 4, s, 'on-white');
const tick = (y, s) => `<path d="M0 ${y}.5h2" stroke="#fff"/>` + text(6, y + 4, s);
draw('main-scale',
  ['1.37860','1.37390','1.36920','1.36450','1.35980','1.35510','1.35030','1.34560','1.34090','1.33620','1.33150','1.32680','1.32210','1.31730','1.31260']
    .map((s, k) => tick(25 + 33 * k, s)).join('') +
  tag(160, '1.35926', '#fff') + tag(277, '1.34264', '#fff') + tag(286, '1.34143', '#fff') + tag(471, '1.31479', '#ff7f50'));

const bars = (top, base, list) => parse(list).map(([i, y]) =>
  `<rect x="${bx(i) - 1.5}" y="${Math.min(y, base) - top}" width="3" height="${Math.max(Math.abs(y - base), 1)}" fill="#c0c0c0" shape-rendering="crispEdges"/>`).join('');

const O = 567;
draw('osc',
  bars(O, 657, '1:647 631 619 614 591 575 580 593 601 613 608 615 609 607 615 619 631 632 622 624 628 655 675 679 682 670 646 623 600 589 583 581 603 615 624 641 654 664 670 689 710 729 730 728 725 706 685 664 660 672 693 705 731 748 738 731 722 702 673 651 643 627 607 601 597 607 617 631 649 640 648 649 646 643 643 637 662 666 672') +
  verticals() + [605, 718].map(y => hline(y - O, '#c0c0c0', '3 3')).join('') + [657, 661].map(y => hline(y - O, '#fff', '3 3')).join('') +
  line(O, '#f00', '652 628 607 592 592 589 586 590 613 633 656 652 653 625 625 626 632 660 660 646 622 616 676 712 727 715 683 648 604 586 586 589 589 603 625 655 687 707 717 716 729 743 753 743 733 722 704 670 619 608 635 695 728 745 744 730 713 692 671 628 591 581 582 583 587 591 610 628 668 708 694 694 667 672 643 625 602 643 656 681') +
  line(O, '#ff0', '660 643 628 610 597 591 589 589 597 613 634 647 653 643 634 626 628 640 650 655 642 628 638 667 704 717 708 680 643 613 592 588 588 592 607 628 657 683 703 713 720 729 742 746 743 733 720 698 663 632 621 647 687 723 739 740 729 712 692 662 630 599 584 583 584 587 597 609 637 668 690 698 684 677 660 648 623 623 633 659') +
  line(O, '#32cd32', '665 659 653 643 634 620 607 597 592 589 593 600 605 609 610 610 612 617 622 624 627 627 632 641 652 663 672 670 659 645 626 608 594 592 594 602 613 628 639 650 663 677 692 706 717 723 723 714 700 687 677 674 677 692 709 724 732 734 728 713 697 678 658 638 625 615 607 606 612 620 629 637 643 647 646 646 645 646 650 655') +
  line(O, '#f0f', '668 647 622 594 593 586 582 585 602 612 620 613 613 599 599 603 613 639 641 629 613 606 661 703 727 714 683 648 604 586 586 589 589 603 618 633 637 647 658 660 688 720 754 747 741 734 722 700 663 649 665 707 732 746 744 731 713 695 684 662 641 630 622 605 592 585 595 602 615 633 633 643 638 656 655 653 639 667 672 690') +
  line(O, '#00ced1', '674 659 645 620 602 591 586 585 589 600 611 616 616 609 603 601 605 619 632 636 628 616 626 657 697 714 708 680 643 613 591 588 588 594 605 619 629 638 648 656 668 688 718 741 747 741 732 719 695 672 660 675 702 728 740 740 730 713 697 680 663 644 631 619 607 593 591 593 604 617 628 637 638 646 649 654 648 652 659 676') +
  text(4, 12, 'MACD(7,10,5) -0.000531 0.000076&#160; Sto(8,3,3) 39.6294 51.0664&#160; Sto(14,3,3) 34.8965 42.3008'));
draw('osc-scale', text(2, 11, '0.00348') + text(2, 43, '80') + text(2, 95, '0.00') + text(2, 99, '50') + text(2, 156, '20') + text(2, 187, '-0.003825'));

const P = 759;
draw('osc2',
  bars(P, 779, '1:773 772 769 767 763 761 761 761 762 762 763 763 763 763 763 764 764 764 764 764 764 767 770 771 772 772 772 770 767 765 764 763 764 765 766 766 768 770 771 773 777 781 782 784 785 786 785 782 781 783 784 787 789 791 793 793 793 792 788 787 786 783 780 779 776 777') +
  verticals() + [766, 776, 779, 787].map(y => hline(y - P, '#fff', '3 3')).join('') +
  text(4, 12, 'MACD(12,26,9) 0.000094 0.000920&#160; Sto(5,3,3) 30.6794 49.4357') +
  line(P, '#32cd32', '0:765 3:766 8:765 10:763 12:762 16:762 20:763 22:765 24:767 26:768 30:769 32:769 33:766 37:765 39:766 41:769 44:773 46:777 48:780 50:782 53:783 55:786 57:788 58:789 62:789 63:787 65:784 66:782 67:781 69:778 71:777 76:776 79:777') +
  line(P, '#f00', '0:772 2:769 4:766 765 764 765 772 778 782 778 776 769 769 772 776 781 781 773 769 769 779 787 788 787 780 772 764 763 31:765 765 772 777 781 784 38:785 784 787 791 793 791 789 785 779 769 762 765 773 787 790 792 791 788 782 776 770 765 762 762 63:765 65:766 772 777 787 792 783 781 775 74:771 76:766 774 777 780') +
  line(P, '#ff0', '0:773 2:769 4:767 7:764 767 772 778 12:779 774 771 16:771 777 778 778 774 771 772 777 784 787 785 779 772 766 763 32:765 768 772 778 781 784 40:784 42:789 791 791 788 784 778 770 766 767 776 783 789 791 791 787 782 776 770 765 762 63:764 65:765 67:771 777 785 787 785 779 776 773 76:769 769 772 777') +
  `<path d="M0 29v6h6z" fill="#708090"/>`);
draw('osc2-scale', text(2, 11, '0.009333') + text(2, 13, '80') + text(2, 22, '50') + text(2, 24, '0.00') + text(2, 33, '-0.007818') + text(2, 33, '20'));

const days = ['16 May', '22 May', '28 May', '3 Jun', '9 Jun', '13 Jun', '19 Jun', '25 Jun', '1 Jul', '7 Jul', '11 Jul', '17 Jul', '23 Jul', '29 Jul', '4 Aug', '8 Aug', '14 Aug', '20 Aug', '26 Aug', '1 Sep'];
draw('dates', days.map((d, k) =>
  `<path d="M${bx(k * 4) + 1} 0v3" stroke="#fff"/>` + text(k * 64, 12, d + ' 2025')).join('') +
  `<rect x="841" y="2" width="80" height="12" fill="#fff"/>` + text(881, 12, '2025.08.01 00:00', 'on-white', 'middle'));
```
